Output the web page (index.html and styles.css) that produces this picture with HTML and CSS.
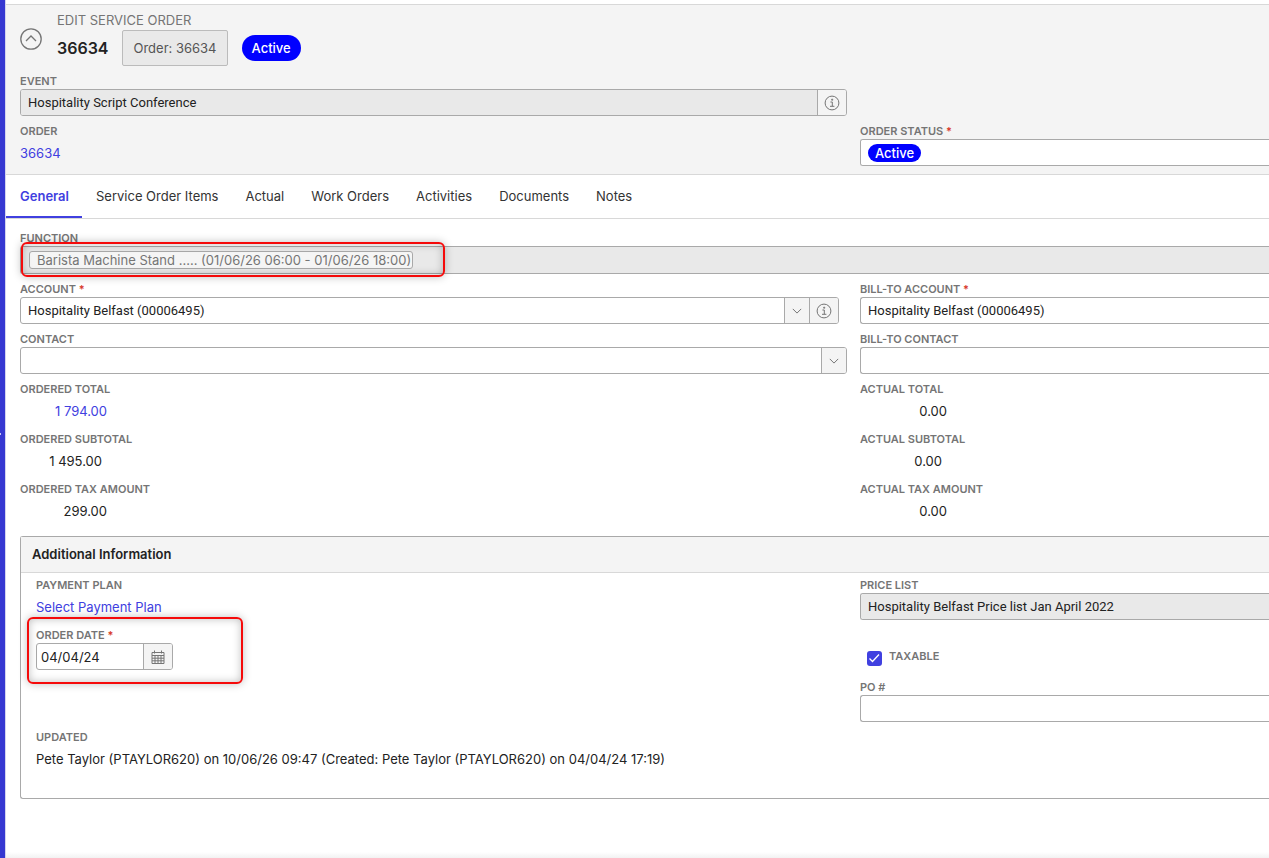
FILE: index.html
```html
<!DOCTYPE html>
<html lang="en">
<head>
    <meta charset="UTF-8">
    <meta name="viewport" content="width=device-width, initial-scale=1.0">
    <title>Edit Service Order - 36634</title>
    <link rel="stylesheet" href="styles.css">
</head>
<body>
    <!-- Shared icons -->
    <svg class="sprite" aria-hidden="true">
        <symbol id="icon-info" viewBox="0 0 16 16">
            <circle cx="8" cy="8" r="6.9"/>
            <path d="M6.4 7h1.9v4.2M6 11.3h4.4M7.7 4.2h1v1h-1z"/>
        </symbol>
        <symbol id="icon-down" viewBox="0 0 16 16">
            <path d="M3.8 5.9L8 10.1l4.2-4.2"/>
        </symbol>
        <symbol id="icon-calendar" viewBox="0 0 16 16">
            <path d="M2 3.5h12v11H2zM2 6.5h12M2 9.2h12M2 11.8h12M5 6.5v8M8 6.5v8M11 6.5v8M4.5 1.5v3M11.5 1.5v3"/>
        </symbol>
    </svg>

    <div class="rail"><span class="rail-handle"></span></div>

    <main class="page">
        <header class="order-header">
            <div class="title-bar">
                <button type="button" class="collapse" aria-label="Collapse header">
                    <svg viewBox="0 0 22 22"><circle cx="11" cy="11" r="10.2"/><path d="M6 13l5-5 5 5"/></svg>
                </button>
                <div>
                    <div class="subtitle">EDIT SERVICE ORDER</div>
                    <div class="title-row">
                        <h1>36634</h1>
                        <span class="order-tag">Order: 36634</span>
                        <span class="pill pill-large">Active</span>
                    </div>
                </div>
            </div>

            <div class="form-grid">
                <div class="field">
                    <label for="event">EVENT</label>
                    <div class="control">
                        <input type="text" id="event" class="disabled" value="Hospitality Script Conference" readonly>
                        <button type="button" class="info" aria-label="Event details"><svg><use href="#icon-info"/></svg></button>
                    </div>
                </div>
                <div class="field start">
                    <span class="label">ORDER</span>
                    <div class="value"><a href="#">36634</a></div>
                </div>
                <div class="field">
                    <label for="status">ORDER STATUS <b>*</b></label>
                    <div class="control open">
                        <button type="button" id="status" class="status"><span class="pill">Active</span></button>
                    </div>
                </div>
            </div>
        </header>

        <nav class="tabs">
            <a href="#" class="active">General</a>
            <a href="#">Service Order Items</a>
            <a href="#">Actual</a>
            <a href="#">Work Orders</a>
            <a href="#">Activities</a>
            <a href="#">Documents</a>
            <a href="#">Notes</a>
        </nav>

        <form class="general">
            <div class="form-grid">
                <div class="field full">
                    <span class="label">FUNCTION</span>
                    <div class="control open disabled chips">
                        <span class="chip">Barista Machine Stand ..... (01/06/26 06:00 - 01/06/26 18:00)</span>
                    </div>
                    <span class="highlight highlight-function"></span>
                </div>

                <div class="field">
                    <label for="account">ACCOUNT <b>*</b></label>
                    <div class="control account">
                        <input type="text" id="account" value="Hospitality Belfast (00006495)">
                        <button type="button" aria-label="Choose account"><svg><use href="#icon-down"/></svg></button>
                        <button type="button" class="info" aria-label="Account details"><svg><use href="#icon-info"/></svg></button>
                    </div>
                </div>
                <div class="field">
                    <label for="billAccount">BILL-TO ACCOUNT <b>*</b></label>
                    <div class="control open"><input type="text" id="billAccount" value="Hospitality Belfast (00006495)"></div>
                </div>

                <div class="field">
                    <label for="contact">CONTACT</label>
                    <div class="control">
                        <input type="text" id="contact">
                        <button type="button" aria-label="Choose contact"><svg><use href="#icon-down"/></svg></button>
                    </div>
                </div>
                <div class="field">
                    <label for="billContact">BILL-TO CONTACT</label>
                    <div class="control open"><input type="text" id="billContact"></div>
                </div>

                <div class="field">
                    <span class="label">ORDERED TOTAL</span>
                    <div class="value amount"><a href="#">1 794.00</a></div>
                </div>
                <div class="field">
                    <span class="label">ACTUAL TOTAL</span>
                    <div class="value amount">0.00</div>
                </div>

                <div class="field">
                    <span class="label">ORDERED SUBTOTAL</span>
                    <div class="value amount subtotal">1 495.00</div>
                </div>
                <div class="field">
                    <span class="label">ACTUAL SUBTOTAL</span>
                    <div class="value amount subtotal">0.00</div>
                </div>

                <div class="field">
                    <span class="label">ORDERED TAX AMOUNT</span>
                    <div class="value amount">299.00</div>
                </div>
                <div class="field">
                    <span class="label">ACTUAL TAX AMOUNT</span>
                    <div class="value amount">0.00</div>
                </div>
            </div>

            <section class="panel">
                <h2>Additional Information</h2>
                <div class="form-grid">
                    <div class="field">
                        <span class="label">PAYMENT PLAN</span>
                        <div class="value"><a href="#">Select Payment Plan</a></div>
                    </div>
                    <div class="field">
                        <label for="priceList">PRICE LIST</label>
                        <div class="control open"><input type="text" id="priceList" class="disabled" value="Hospitality Belfast Price list Jan April 2022" readonly></div>
                    </div>

                    <div class="field">
                        <label for="orderDate">ORDER DATE <b>*</b></label>
                        <div class="control date">
                            <input type="text" id="orderDate" value="04/04/24">
                            <button type="button" class="info" aria-label="Open calendar"><svg><use href="#icon-calendar"/></svg></button>
                        </div>
                        <span class="highlight highlight-date"></span>
                    </div>
                    <div class="field check">
                        <input type="checkbox" id="taxable" checked>
                        <label for="taxable">TAXABLE</label>
                    </div>

                    <div class="field side">
                        <label for="po">PO #</label>
                        <div class="control open"><input type="text" id="po"></div>
                    </div>

                    <div class="field full">
                        <span class="label">UPDATED</span>
                        <div class="value">Pete Taylor (PTAYLOR620) on 10/06/26 09:47 (Created: Pete Taylor (PTAYLOR620) on 04/04/24 17:19)</div>
                    </div>
                </div>
            </section>
        </form>

        <div class="page-end"></div>
    </main>
</body>
</html>
```
FILE: styles.css
```css
* { box-sizing: border-box; }
body {
    display: flex;
    min-height: 100vh;
    margin: 0;
    background-color: #fff;
    color: #222;
    font-family: Inter, "Liberation Sans", sans-serif;
    font-size: 13px;
    line-height: 16px;
}
a { color: #4040e0; text-decoration: none; }
button, input { font: inherit; color: inherit; }
button { padding: 0; border: none; cursor: pointer; }
svg { fill: none; stroke: #757575; stroke-width: 1; }
.sprite { display: none; }

/* Left rail */
.rail { display: flex; align-items: center; flex: none; width: 6px; background-color: #3638d1; border-right: 1px solid #d4d4ee; }
.rail-handle { width: 1px; height: 2px; margin-top: 10px; background-color: #c8c8f5; }

.page { display: flex; flex-direction: column; flex: 1; min-width: 0; padding-top: 4px; }

/* Header */
.order-header { padding: 7px 0 8px 14px; background-color: #f4f4f4; border-top: 1px solid #d8d8d8; border-bottom: 1px solid #d8d8d8; }
.title-bar { display: flex; gap: 15px; margin-bottom: 7px; }
.collapse { width: 22px; height: 22px; margin-top: 16px; background: none; }
.collapse svg { display: block; width: 22px; height: 22px; stroke-width: 1.3; }
.subtitle { color: #757575; }
.title-row { display: flex; align-items: center; gap: 14px; margin-top: 2px; }
h1 { margin: 0; font-size: 16px; font-weight: 600; }
.order-tag { padding: 9px 10px; background-color: #e9e9e9; border: 1px solid #bbb; border-radius: 2px; color: #555; }
.pill { padding: 1px 7px; border-radius: 13px; background-color: #0000ff; color: #fff; font-weight: 500; }
.pill-large { padding: 5px 10px; }

/* Fields */
.form-grid { display: grid; grid-template-columns: minmax(0, 1fr) 409px; gap: 7px 13px; }
.field { position: relative; min-width: 0; }
.full { grid-column: 1 / 3; }
.start { grid-column: 1; }
.side { grid-column: 2; }
label, .label { display: block; height: 16px; color: #757575; font-size: 11px; font-weight: 600; }
label b { color: #d83a2b; font-weight: 600; }
.value { height: 27px; line-height: 29px; white-space: nowrap; }
.amount { width: 87px; text-align: right; }
.subtotal { width: 82px; }

.control { display: flex; height: 27px; background-color: #fff; border: 1px solid #a9a9a9; border-radius: 3px; overflow: hidden; }
.control.open { border-right: none; border-radius: 3px 0 0 3px; }
.control input { flex: 1; min-width: 0; padding: 0 7px; background: none; border: none; outline: none; font-family: Roboto, sans-serif; }
.control .disabled, .control.disabled { background-color: #e9e9e9; }
.control button { display: flex; align-items: center; justify-content: center; width: 25px; background-color: #f4f4f4; border-left: 1px solid #a9a9a9; }
.control .info { width: 29px; }
.control button svg { width: 16px; height: 16px; }
.control .status { justify-content: flex-start; flex: 1; padding-left: 7px; background-color: #fff; border-left: none; }
.account { margin-right: 8px; }
.date { width: 137px; }
.date input { padding: 0 4px; font-family: inherit; }
.chips { align-items: center; height: 28px; padding-left: 8px; }
.chip { padding: 0 1px 0 7px; background-color: #f5f5f5; border: 1px solid #a9a9a9; border-radius: 3px; color: #757575; white-space: nowrap; }

.check { display: flex; gap: 7px; min-height: 45px; padding: 21px 0 0 7px; }
.check input { appearance: none; width: 15px; height: 15px; margin: 3px 0 0; border-radius: 3px; background: #4040e0 url("data:image/svg+xml,%3Csvg xmlns='http://www.w3.org/2000/svg' viewBox='0 0 15 15'%3E%3Cpath d='M2.5 7.5l3 3 6.5-7' fill='none' stroke='white' stroke-width='1.3'/%3E%3C/svg%3E"); }

/* Tabs */
.tabs { display: flex; height: 44px; border-bottom: 1px solid #d8d8d8; }
.tabs a { padding: 0 13px 0 14px; color: #333; line-height: 42px; white-space: nowrap; }
.tabs .active { border-bottom: 2px solid #4040e0; color: #4040e0; font-weight: 600; }

.general { padding: 11px 0 0 14px; }

/* Additional information */
.panel { margin-top: 12px; padding-bottom: 26px; border: 1px solid #a9a9a9; border-right: none; border-radius: 3px 0 0 3px; }
.panel h2 { margin: 0; padding: 9px 11px 10px; background-color: #f4f4f4; border-bottom: 1px solid #d8d8d8; font-size: 13px; font-weight: 600; }
.panel .form-grid { padding: 4px 0 0 15px; }

/* Red call-outs over the form */
.highlight { position: absolute; border: 2px solid #f50a0a; border-radius: 6px; box-shadow: 0 0 8px rgba(0,0,0,0.25), inset 0 0 8px rgba(0,0,0,0.25); pointer-events: none; }
.highlight-function { top: 12px; left: 1px; width: 424px; height: 35px; }
.highlight-date { top: -10px; left: -9px; width: 216px; height: 67px; }

.page-end { height: 6px; margin-top: auto; background: linear-gradient(#fff, #f2f2f2); }
```
